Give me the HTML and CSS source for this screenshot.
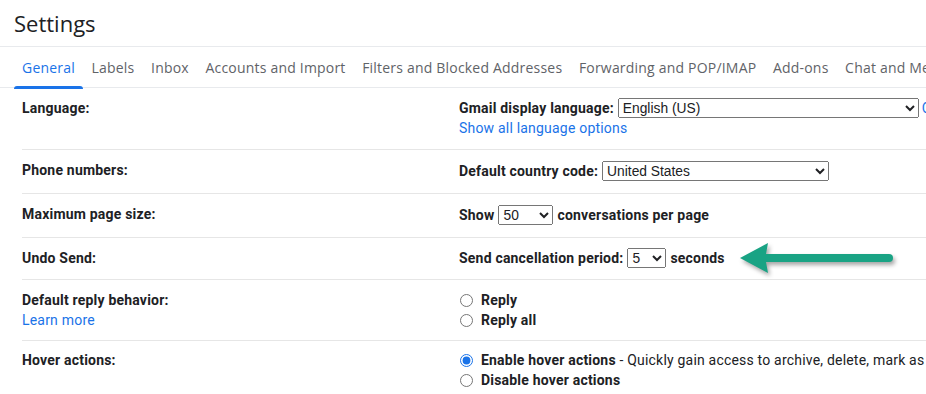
FILE: index.html
```html
<!DOCTYPE html>
<html lang="en">
<head>
<meta charset="utf-8">
<title>Settings</title>
<link rel="stylesheet" href="styles.css">
</head>
<body>
<div class="page">
  <header class="header">
    <h1 class="title">Settings</h1>
  </header>
  <nav class="tabs">
    <a class="tab active">General</a>
    <a class="tab">Labels</a>
    <a class="tab">Inbox</a>
    <a class="tab">Accounts and Import</a>
    <a class="tab">Filters and Blocked Addresses</a>
    <a class="tab">Forwarding and POP/IMAP</a>
    <a class="tab">Add-ons</a>
    <a class="tab">Chat and Meet</a>
    <a class="tab">Advanced</a>
  </nav>
  <div class="rows">
    <div class="row row-lang">
      <div class="label">Language:</div>
      <div class="value">
        <div class="line"><b>Gmail display language:</b><select class="sel sel-lang"><option>English (US)</option></select><a class="link change">Change language settings for other Google products</a></div>
        <div class="line"><a class="link">Show all language options</a></div>
      </div>
    </div>
    <div class="row">
      <div class="label">Phone numbers:</div>
      <div class="value">
        <div class="line ctl"><b>Default country code:</b><select class="sel sel-country"><option>United States</option></select></div>
      </div>
    </div>
    <div class="row">
      <div class="label">Maximum page size:</div>
      <div class="value">
        <div class="line ctl"><b>Show</b><select class="sel sel-size"><option>50</option></select><b>conversations per page</b></div>
      </div>
    </div>
    <div class="row row-undo">
      <div class="label">Undo Send:</div>
      <div class="value">
        <div class="line"><b>Send cancellation period:</b><select class="sel sel-undo"><option>5</option></select><b>seconds</b><span class="arrow-anchor"><svg class="arrow" width="170" height="46" viewBox="0 0 170 46"><line x1="30" y1="22" x2="154" y2="22" stroke="#19a384" stroke-width="8" stroke-linecap="round"/><polygon points="5,22 33,7 31,18 31,26 33,37" fill="#19a384"/></svg></span></div>
      </div>
    </div>
    <div class="row row-reply">
      <div class="label">Default reply behavior:<br><a class="link">Learn more</a></div>
      <div class="value">
        <label class="line radio"><input type="radio" name="reply"><b>Reply</b></label>
        <label class="line radio"><input type="radio" name="reply"><b>Reply all</b></label>
      </div>
    </div>
    <div class="row last">
      <div class="label">Hover actions:</div>
      <div class="value">
        <label class="line radio"><input type="radio" name="hover" checked><span><b>Enable hover actions</b> - Quickly gain access to archive, delete, mark as read, and snooze controls on hover.</span></label>
        <label class="line radio"><input type="radio" name="hover"><b>Disable hover actions</b></label>
      </div>
    </div>
  </div>
</div>
</body>
</html>
```

FILE: styles.css
```css
html, body {
  margin: 0;
  padding: 0;
  background: #fff;
  overflow: hidden;
}
body {
  width: 926px;
  height: 394px;
  font-family: Roboto, "Liberation Sans", Arial, sans-serif;
  font-size: 14px;
  letter-spacing: 0.2px;
  color: #202124;
}
.page {
  white-space: nowrap;
}
.header {
  height: 47px;
  border-bottom: 1px solid #e8eaed;
  box-sizing: border-box;
  padding-left: 14px;
}
.title {
  margin: 0;
  padding-top: 7px;
  font-family: "Open Sans", Roboto, sans-serif;
  font-weight: 400;
  font-size: 22px;
  line-height: 32px;
  letter-spacing: 0;
  color: #202124;
}
.tabs {
  display: flex;
  height: 41px;
  box-sizing: border-box;
  border-bottom: 1px solid #e8eaed;
  padding-left: 14px;
}
.tab {
  position: relative;
  display: flex;
  align-items: center;
  padding: 0 8px;
  font-family: "Open Sans", Roboto, sans-serif;
  font-size: 14px;
  color: #5f6368;
  letter-spacing: 0.2px;
}
.tab + .tab {
  margin-left: 0.6px;
}
.tab.active {
  color: #1a73e8;
}
.tab.active::after {
  content: "";
  position: absolute;
  left: 0;
  right: 0;
  bottom: -2px;
  height: 3px;
  background: #1a73e8;
  border-radius: 3px 3px 0 0;
}
.rows {
  margin-left: 22px;
}
.row {
  display: grid;
  grid-template-columns: 437px auto;
  padding: 10px 0 11px;
  border-bottom: 1px solid #e6e6e6;
}
.row-reply {
  padding-bottom: 10px;
}
.row.last {
  padding-top: 9px;
  border-bottom: none;
}
.label {
  font-weight: 700;
  line-height: 20px;
}
.label .link {
  font-weight: 400;
}
.value {
  display: flex;
  flex-direction: column;
}
.line {
  display: flex;
  align-items: center;
  height: 20px;
  line-height: 20px;
}
.line.ctl {
  height: 22px;
}
.link {
  color: #1a73e8;
  text-decoration: none;
  cursor: pointer;
}
.change {
  margin-left: -1px;
}
.sel {
  box-sizing: border-box;
  height: 20px;
  margin: 0 4px;
  font-family: Arial, "Liberation Sans", sans-serif;
  font-size: 13.8px;
  letter-spacing: 0;
  color: #202124;
}
.sel-lang { width: 301px; }
.sel-country { width: 227px; }
.sel-size { width: 55px; }
.sel-undo { width: 39px; }
.arrow-anchor {
  position: relative;
  display: inline-block;
  width: 0;
  height: 20px;
}
.arrow {
  position: absolute;
  left: 10px;
  top: -12px;
  filter: drop-shadow(2px 3px 2px rgba(0, 0, 0, 0.35));
}
.radio input {
  margin: 0 8px 0 1px;
  width: 13px;
  height: 13px;
  accent-color: #1a73e8;
}
```
